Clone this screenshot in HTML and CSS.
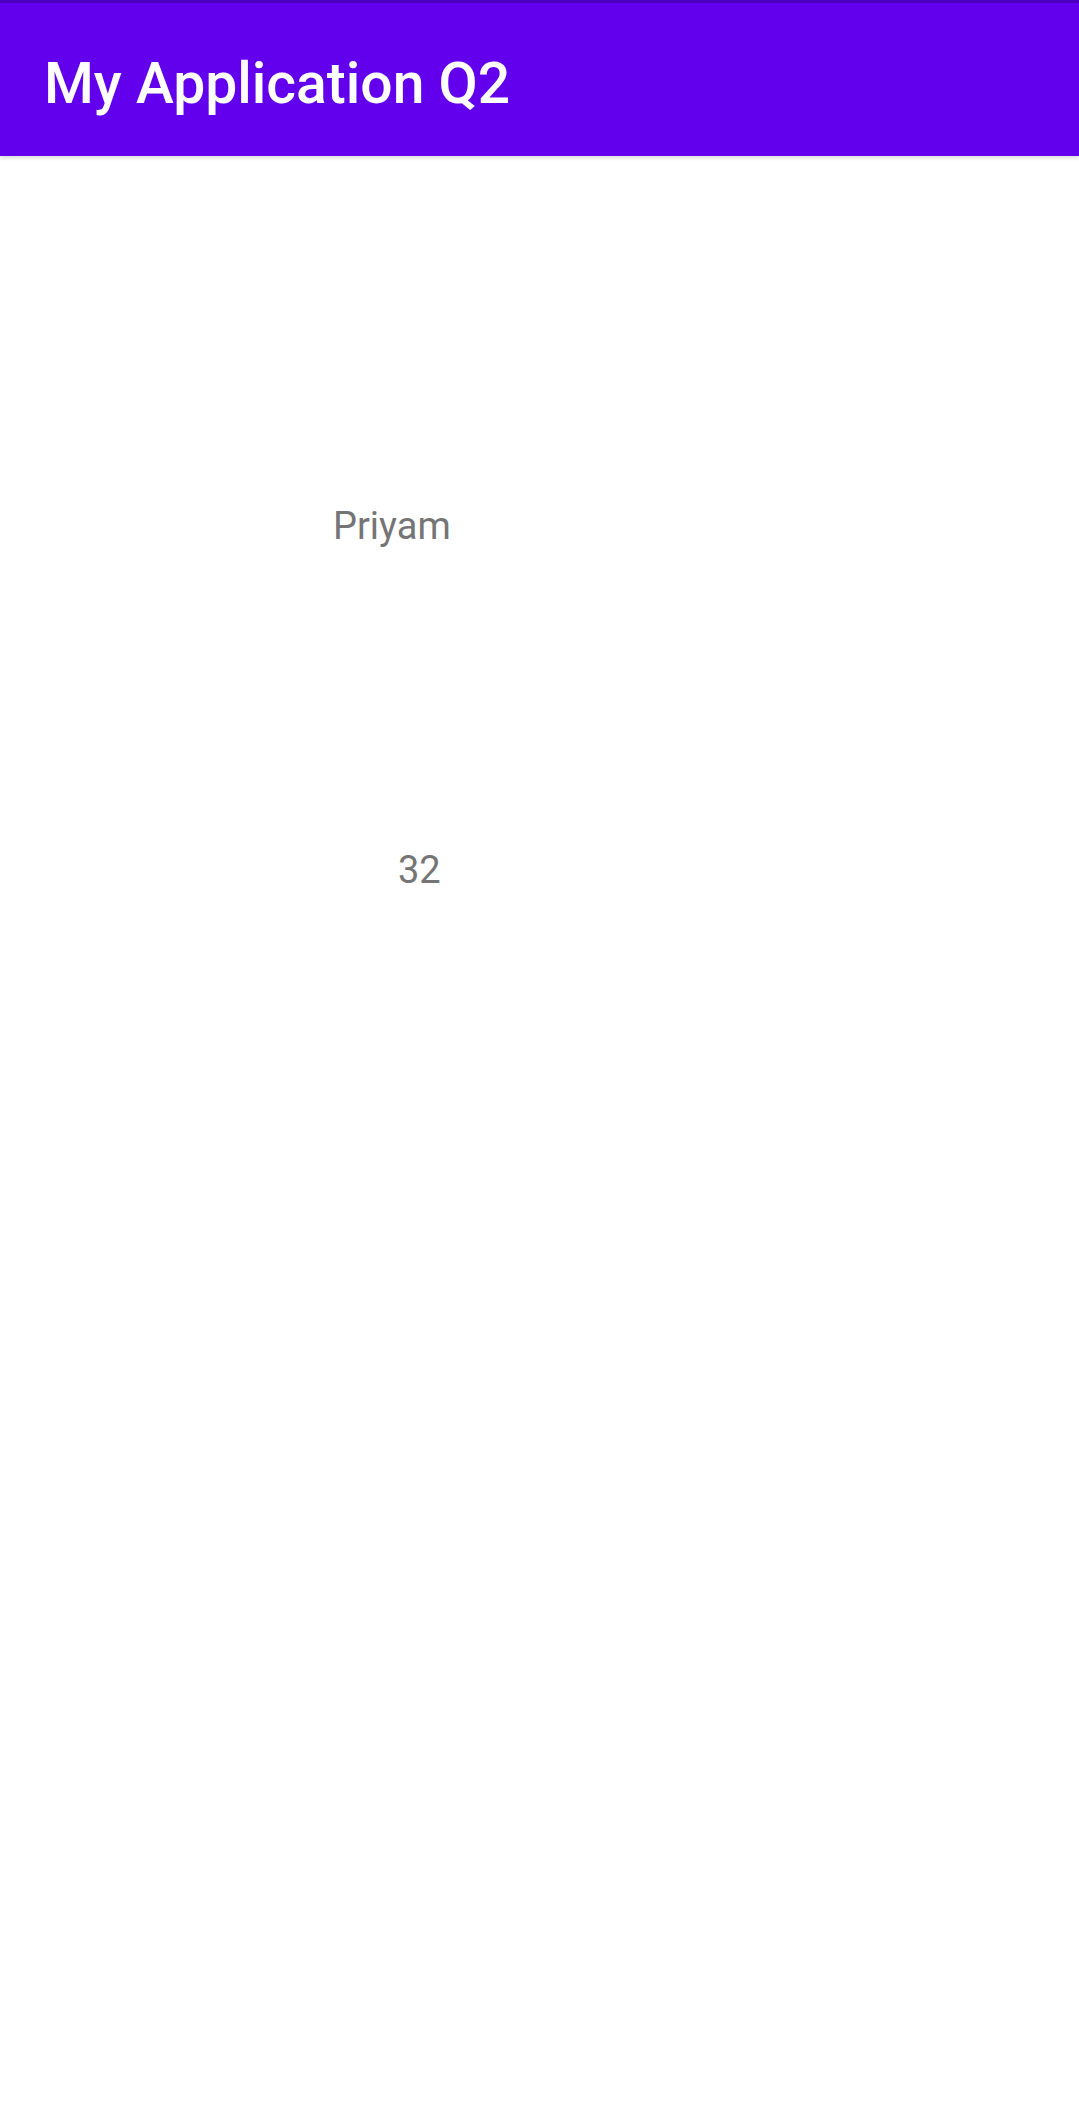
FILE: index.html
```html
<!DOCTYPE html>
<html>
<head>
<meta charset="utf-8">
<link rel="stylesheet" href="styles.css">
</head>
<body>
<div class="status"></div>
<header class="appbar"><h1 class="title">My Application Q2</h1></header>
<main class="content">
  <div class="name">Priyam</div>
  <div class="age">32</div>
</main>
</body>
</html>
```
FILE: styles.css
```css
html, body {
  margin: 0;
  padding: 0;
  background: #ffffff;
  font-family: Roboto, "Noto Sans", sans-serif;
}
.status {
  height: 3px;
  background: #4a00c0;
}
.appbar {
  box-sizing: border-box;
  height: 153px;
  background: #6200ee;
  display: flex;
  align-items: center;
  padding-left: 44px;
  padding-top: 8px;
  box-shadow: 0 2px 4px rgba(0,0,0,0.15);
}
.title {
  margin: 0;
  color: #ffffff;
  font-size: 57px;
  font-weight: 500;
  line-height: 1;
}
.content {
  display: flex;
  flex-direction: column;
}
.name {
  margin-top: 351px;
  margin-left: 333px;
  font-size: 38px;
  color: #757575;
  line-height: 1;
}
.age {
  margin-top: 306px;
  margin-left: 398px;
  font-size: 38px;
  color: #757575;
  line-height: 1;
}
```
